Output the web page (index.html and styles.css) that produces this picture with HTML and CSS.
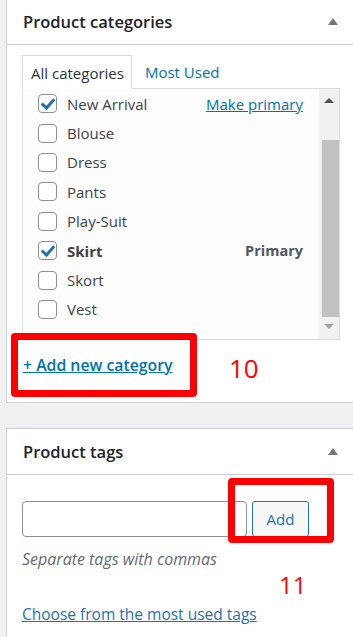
FILE: index.html
```html
<!DOCTYPE html>
<html lang="en">
<head>
    <meta charset="UTF-8">
    <meta name="viewport" content="width=device-width, initial-scale=1.0">
    <title>Product categories and tags</title>
    <link rel="stylesheet" href="styles.css">
</head>
<body>
    <div class="postbox postbox-first">
        <div class="postbox-header">
            <h2>Product categories</h2>
            <span class="toggle-arrow"></span>
        </div>
        <div class="inside">
            <ul class="tabs">
                <li class="tab active">All categories</li>
                <li class="tab"><a href="#">Most Used</a></li>
            </ul>
            <div class="tab-panel">
                <ul class="checklist">
                    <li class="cat-row"><span class="checkbox checked"></span><span class="cat-name">New Arrival</span><a class="make-primary" href="#">Make primary</a></li>
                    <li class="cat-row"><span class="checkbox"></span><span class="cat-name">Blouse</span></li>
                    <li class="cat-row"><span class="checkbox"></span><span class="cat-name">Dress</span></li>
                    <li class="cat-row"><span class="checkbox"></span><span class="cat-name">Pants</span></li>
                    <li class="cat-row"><span class="checkbox"></span><span class="cat-name">Play-Suit</span></li>
                    <li class="cat-row"><span class="checkbox checked"></span><span class="cat-name primary">Skirt</span><span class="primary-label">Primary</span></li>
                    <li class="cat-row"><span class="checkbox"></span><span class="cat-name">Skort</span></li>
                    <li class="cat-row"><span class="checkbox"></span><span class="cat-name">Vest</span></li>
                </ul>
                <div class="fake-scrollbar">
                    <span class="sb-up"></span>
                    <span class="sb-thumb"></span>
                    <span class="sb-down"></span>
                </div>
            </div>
            <div class="add-row">
                <a class="add-link" href="#">+ Add new category</a>
            </div>
        </div>
        <!-- annotation -->
        <span class="mark mark-10"></span>
        <span class="mark-num num-10">10</span>
    </div>

    <div class="postbox">
        <div class="postbox-header">
            <h2>Product tags</h2>
            <span class="toggle-arrow"></span>
        </div>
        <div class="inside">
            <div class="tag-form">
                <input type="text" class="tag-input">
                <button type="button" class="tag-add">Add</button>
            </div>
            <p class="howto">Separate tags with commas</p>
            <a class="tag-cloud-link" href="#">Choose from the most used tags</a>
        </div>
        <!-- annotation -->
        <span class="mark mark-11"></span>
        <span class="mark-num num-11">11</span>
    </div>
</body>
</html>
```

FILE: styles.css
```css
body {
    font-family: 'Open Sans', 'Noto Sans', sans-serif;
    margin: 0;
    padding: 0;
    background-color: #f1f1f1;
    color: #3c434a;
    overflow: hidden;
}
a {
    color: #0073aa;
}
ul {
    list-style: none;
    margin: 0;
    padding: 0;
}
.postbox {
    position: relative;
    background-color: #fff;
    border: 1px solid #ccd0d4;
    border-right: none;
    margin-left: 6px;
}
.postbox-first {
    margin-top: -2px;
    margin-bottom: 25px;
}
.postbox-header {
    display: flex;
    align-items: center;
    justify-content: space-between;
    height: 45px;
    padding: 0 15px 0 16px;
    border-bottom: 1px solid #ccd0d4;
}
.postbox-header h2 {
    margin: 0;
    font-size: 16.5px;
    font-weight: 600;
    color: #1d2327;
}
.toggle-arrow {
    width: 0;
    height: 0;
    border-left: 5px solid transparent;
    border-right: 5px solid transparent;
    border-bottom: 7px solid #72777c;
}
.inside {
    padding: 10px 13px 0 15px;
}
.tabs {
    display: flex;
    align-items: flex-end;
    margin-bottom: -1px;
}
.tab {
    font-size: 15px;
    padding: 0 13px;
    height: 34px;
    line-height: 34px;
    box-sizing: border-box;
}
.tab a {
    text-decoration: none;
}
.tab.active {
    padding: 0 7px 0 8px;
    background-color: #fff;
    border: 1px solid #dcdcde;
    border-bottom: 1px solid #fff;
    color: #2c3338;
    position: relative;
}
.tab-panel {
    display: flex;
    height: 252px;
    box-sizing: border-box;
    border: 1px solid #dcdcde;
    background-color: #fdfdfd;
}
.checklist {
    flex: 1;
    padding: 0 16px 0 15px;
}
.cat-row {
    display: flex;
    align-items: center;
    height: 29.4px;
    font-size: 15px;
}
.checkbox {
    width: 17px;
    height: 17px;
    border: 1px solid #8c8f94;
    border-radius: 4px;
    background-color: #fff;
    margin-right: 10px;
    position: relative;
    flex: none;
}
.checkbox.checked::after {
    content: "";
    position: absolute;
    left: 5px;
    top: 1px;
    width: 5px;
    height: 10px;
    border-right: 3px solid #2271b1;
    border-bottom: 3px solid #2271b1;
    transform: rotate(42deg);
}
.cat-name {
    flex: 1;
}
.cat-name.primary {
    font-weight: 700;
}
.make-primary {
    font-size: 15px;
}
.primary-label {
    font-weight: 700;
    font-size: 14.5px;
    color: #50575e;
}
.fake-scrollbar {
    width: 20px;
    background-color: #f1f1f1;
    display: flex;
    flex-direction: column;
    align-items: center;
}
.sb-up, .sb-down {
    width: 0;
    height: 0;
    border-left: 5px solid transparent;
    border-right: 5px solid transparent;
}
.sb-up {
    margin-top: 9px;
    border-bottom: 5px solid #505050;
}
.sb-thumb {
    width: 17px;
    margin: 37px 0 0 2px;
    height: 177px;
    background-color: #c1c1c1;
}
.sb-down {
    margin-top: 7px;
    border-top: 5px solid #a3a3a3;
}
.add-row {
    padding: 15px 0 27px 1px;
    line-height: 20px;
}
.add-link {
    font-size: 15.8px;
    font-weight: 600;
}
.tag-form {
    display: flex;
    gap: 5px;
    padding-top: 16px;
}
.tag-input {
    width: 225px;
    height: 36px;
    box-sizing: border-box;
    border: 1px solid #8c8f94;
    border-radius: 4px;
    margin: 0;
}
.tag-add {
    width: 57px;
    height: 36px;
    font-family: inherit;
    font-size: 15px;
    color: #2271b1;
    background-color: #f6f7f7;
    border: 1px solid #2271b1;
    border-radius: 3px;
}
.howto {
    margin: 12px 0 0;
    line-height: 20px;
    font-size: 16px;
    font-style: italic;
    color: #646970;
}
.tag-cloud-link {
    display: inline-block;
    margin: 35px 0 30px;
    line-height: 20px;
    font-size: 15.5px;
    color: #2271b1;
}
.mark {
    position: absolute;
    border: 7px solid #ff0000;
    border-radius: 4px;
    box-sizing: border-box;
}
.mark-10 {
    left: 4px;
    top: 334px;
    width: 186px;
    height: 64px;
}
.mark-11 {
    left: 221px;
    top: 49px;
    width: 106px;
    height: 65px;
}
.mark-num {
    position: absolute;
    color: #ff0000;
    line-height: 1;
}
.num-10 {
    left: 222px;
    top: 356px;
    font-size: 26px;
}
.num-11 {
    left: 272px;
    top: 144px;
    font-size: 24px;
}
```
